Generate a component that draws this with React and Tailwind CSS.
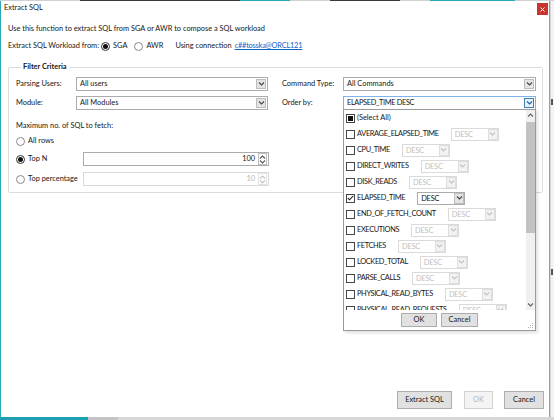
import React from "react";

const Chev = ({ c = "#444", up = false }) => (
  <svg width="7" height="4" viewBox="0 0 7 4" className="block">
    <polyline
      points={up ? "1,3.5 3.5,1 6,3.5" : "1,0.5 3.5,3 6,0.5"}
      fill="none"
      stroke={c}
      strokeWidth="1.1"
    />
  </svg>
);

function ArrowBox({ state = "normal", h = "h-[10px]" }) {
  const cls =
    state === "focus"
      ? "bg-[#e5f1fb] border-[#3c7fb1]"
      : state === "disabled"
      ? "bg-[#f2f2f2] border-[#dedede]"
      : "bg-[#e4e4e4] border-[#bdbdbd]";
  const c = state === "focus" ? "#1f5f9a" : state === "disabled" ? "#c2c2c2" : "#444";
  return (
    <span className={`w-[10px] ${h} border ${cls} flex items-center justify-center shrink-0`}>
      <Chev c={c} />
    </span>
  );
}

function Combo({ value, className = "", state = "normal", textCls = "" }) {
  const border = state === "focus" ? "border-[#7eb4ea]" : "border-[#acacac]";
  return (
    <div className={`h-[14px] flex items-center bg-white border ${border} ${className}`}>
      <span className={`flex-1 pl-[3px] whitespace-nowrap overflow-hidden leading-[12px] ${textCls}`}>{value}</span>
      <span className="mr-[1px]">
        <ArrowBox state={state} />
      </span>
    </div>
  );
}

function MiniCombo({ enabled }) {
  return (
    <div
      className={`ml-[12px] w-[48px] h-[13px] flex items-center bg-white border shrink-0 ${
        enabled ? "border-[#acacac]" : "border-[#dadada]"
      }`}
    >
      <span
        className={`flex-1 pl-[3px] leading-[11px] tracking-[-0.2px] ${
          enabled ? "text-[#111]" : "text-[#c0c0c0]"
        }`}
      >
        DESC
      </span>
      <ArrowBox state={enabled ? "normal" : "disabled"} h="h-[11px]" />
    </div>
  );
}

function Radio({ checked, className = "" }) {
  return (
    <span
      className={`w-[9px] h-[9px] rounded-full border ${
        checked ? "border-[#333]" : "border-[#8a8a8a]"
      } flex items-center justify-center shrink-0 bg-white ${className}`}
    >
      {checked && <span className="w-[5px] h-[5px] rounded-full bg-[#111]" />}
    </span>
  );
}

function Check({ state }) {
  return (
    <span className="w-[9px] h-[9px] border border-[#444] bg-white flex items-center justify-center shrink-0">
      {state === "ind" && <span className="w-[5px] h-[5px] bg-[#111]" />}
      {state === "on" && (
        <svg width="7" height="6" viewBox="0 0 7 6" className="block">
          <polyline points="0.8,3 2.6,4.8 6.2,0.8" fill="none" stroke="#222" strokeWidth="1.1" />
        </svg>
      )}
    </span>
  );
}

function NumInput({ value, disabled }) {
  return (
    <div
      className={`w-[186px] h-[14px] flex items-center bg-white border ${
        disabled ? "border-[#d9d9d9]" : "border-[#acacac]"
      }`}
    >
      <span className={`flex-1 text-right pr-[3px] leading-[12px] ${disabled ? "text-[#b8b8b8]" : ""}`}>{value}</span>
      <span
        className={`w-[9px] h-[12px] mr-[1px] flex flex-col items-center justify-center gap-[1px] border ${
          disabled ? "border-[#e2e2e2]" : "border-[#bdbdbd]"
        }`}
      >
        <Chev up c={disabled ? "#c4c4c4" : "#555"} />
        <Chev c={disabled ? "#c4c4c4" : "#555"} />
      </span>
    </div>
  );
}

const rows = [
  ["AVERAGE_ELAPSED_TIME", false],
  ["CPU_TIME", false],
  ["DIRECT_WRITES", false],
  ["DISK_READS", false],
  ["ELAPSED_TIME", true],
  ["END_OF_FETCH_COUNT", false],
  ["EXECUTIONS", false],
  ["FETCHES", false],
  ["LOCKED_TOTAL", false],
  ["PARSE_CALLS", false],
  ["PHYSICAL_READ_BYTES", false],
  ["PHYSICAL_READ_REQUESTS", false],
];

function Popup() {
  return (
    <div className="absolute left-[342px] top-[108px] w-[193px] h-[222px] bg-white border border-[#9a9a9a] flex flex-col shadow-[2px_2px_3px_rgba(0,0,0,0.12)]">
      <div className="h-[200px] flex shrink-0 overflow-hidden">
        <div className="flex-1 flex flex-col overflow-hidden pl-[2px]">
          <div className="h-[16px] flex items-center shrink-0">
            <Check state="ind" />
            <span className="ml-[2px] whitespace-nowrap">(Select All)</span>
          </div>
          {rows.map(([label, on]) => (
            <div key={label} className="h-[16px] flex items-center shrink-0">
              <Check state={on ? "on" : "off"} />
              <span className="ml-[2px] whitespace-nowrap tracking-[-0.35px]">{label}</span>
              <MiniCombo enabled={on} />
            </div>
          ))}
        </div>
        <div className="w-[9px] flex flex-col bg-[#f0f0f0] shrink-0">
          <div className="h-[10px] flex items-center justify-center">
            <Chev up c="#606060" />
          </div>
          <div className="mt-[2px] h-[111px] bg-[#c2c2c2]" />
          <div className="flex-1" />
          <div className="h-[10px] flex items-center justify-center">
            <Chev c="#606060" />
          </div>
        </div>
      </div>
      <div className="flex-1 flex justify-center items-start pt-[3px] gap-[4px] relative">
        <div className="w-[36px] h-[14px] bg-[#e1e1e1] border border-[#adadad] flex items-center justify-center">OK</div>
        <div className="w-[37px] h-[14px] bg-[#e1e1e1] border border-[#adadad] flex items-center justify-center">Cancel</div>
        <svg width="6" height="6" viewBox="0 0 6 6" className="absolute right-[1px] bottom-[1px]">
          <rect x="4" y="0" width="1" height="1" fill="#b5b5b5" />
          <rect x="2" y="2" width="1" height="1" fill="#b5b5b5" />
          <rect x="4" y="2" width="1" height="1" fill="#b5b5b5" />
          <rect x="0" y="4" width="1" height="1" fill="#b5b5b5" />
          <rect x="2" y="4" width="1" height="1" fill="#b5b5b5" />
          <rect x="4" y="4" width="1" height="1" fill="#b5b5b5" />
        </svg>
      </div>
    </div>
  );
}

function Dialog() {
  return (
    <div className="w-[550px] shrink-0 relative bg-white border-l border-l-[#2aa8ba] border-r border-r-[#9c9c9c] flex flex-col">
      <div className="h-[17px] flex items-start justify-between shrink-0">
        <span className="pl-[3px] pt-[1px]">Extract SQL</span>
        <span className="mt-[2px] mr-[1px] w-[11px] h-[12px] bg-[#c9352d] flex items-center justify-center">
          <svg width="5" height="5" viewBox="0 0 5 5" className="block">
            <path d="M0.5 0.5 L4.5 4.5 M4.5 0.5 L0.5 4.5" stroke="#fff" strokeWidth="1" />
          </svg>
        </span>
      </div>
      <div className="flex-1 flex flex-col pl-[7px] pr-[6px]">
        <p className="mt-[5px] h-[12px]">Use this function to extract SQL from SGA or AWR to compose a SQL workload</p>
        <div className="mt-[5px] h-[12px] flex items-center whitespace-nowrap">
          <span>Extract SQL Workload from:</span>
          <Radio checked className="ml-[2px]" />
          <span className="ml-[3px]">SGA</span>
          <Radio className="ml-[7px]" />
          <span className="ml-[3px]">AWR</span>
          <span className="ml-[12px]">Using connection</span>
          <span className="ml-[3px] text-[#0a64c8] underline tracking-[-0.2px]">c##tosska@ORCL121</span>
        </div>
        <fieldset className="mt-[9px] border border-[#dcdcdc] rounded-[2px] pl-[7px] pr-[6px] pb-[6px]">
          <legend className="ml-[5px] px-[2px] font-bold leading-[12px]">Filter Criteria</legend>
          <div className="mt-[4px] flex items-center h-[14px]">
            <span className="w-[60px] shrink-0">Parsing Users:</span>
            <Combo value="All users" className="w-[192px]" />
            <span className="w-[61px] ml-[14px] shrink-0">Command Type:</span>
            <Combo value="All Commands" className="w-[193px]" />
          </div>
          <div className="mt-[5px] flex items-center h-[14px]">
            <span className="w-[60px] shrink-0">Module:</span>
            <Combo value="All Modules" className="w-[192px]" />
            <span className="w-[61px] ml-[14px] shrink-0">Order by:</span>
            <Combo value="ELAPSED_TIME DESC" className="w-[193px]" state="focus" textCls="tracking-[-0.35px]" />
          </div>
          <div className="mt-[10px] h-[12px]">Maximum no. of SQL to fetch:</div>
          <div className="mt-[2px] flex items-center h-[14px]">
            <Radio />
            <span className="ml-[3px]">All rows</span>
          </div>
          <div className="mt-[4px] flex items-center h-[14px]">
            <div className="w-[67px] flex items-center shrink-0">
              <Radio checked />
              <span className="ml-[3px]">Top N</span>
            </div>
            <NumInput value="100" />
          </div>
          <div className="mt-[6px] flex items-center h-[14px]">
            <div className="w-[67px] flex items-center shrink-0">
              <Radio />
              <span className="ml-[3px]">Top percentage</span>
            </div>
            <NumInput value="10" disabled />
          </div>
        </fieldset>
        <div className="flex-1" />
        <div className="flex justify-end items-center pb-[8px] -mr-[1px]">
          <div className="w-[55px] h-[18px] bg-[#e1e1e1] border border-[#adadad] flex items-center justify-center">
            Extract SQL
          </div>
          <div className="ml-[12px] w-[29px] h-[18px] bg-[#f4f4f4] border border-[#d2d2d2] text-[#b5b5b5] flex items-center justify-center">
            OK
          </div>
          <div className="ml-[11px] w-[40px] h-[18px] bg-[#e1e1e1] border border-[#adadad] flex items-center justify-center">
            Cancel
          </div>
        </div>
      </div>
      <Popup />
    </div>
  );
}

export default function App() {
  return (
    <div className="w-[554px] h-[420px] overflow-hidden flex flex-col bg-[#e4e4e4] font-['Lato',sans-serif] text-[7.4px] leading-[12px] text-[#161616]">
      <div className="h-[1px] flex shrink-0">
        <div className="w-[80px] bg-[#d0d0d0]" />
        <div className="w-[160px] bg-[#3a3a3a]" />
        <div className="w-[50px] bg-[#2ba9bb]" />
        <div className="w-[40px] bg-[#d0d0d0]" />
        <div className="w-[70px] bg-[#3a3a3a]" />
        <div className="w-[30px] bg-[#d0d0d0]" />
        <div className="w-[85px] bg-[#2ba9bb]" />
        <div className="flex-1 bg-[#d0d0d0]" />
      </div>
      <div className="flex flex-1 min-h-0">
        <Dialog />
        <div className="flex-1 bg-[#f3f3f3] flex flex-col border-l border-l-[#d6d6d6]">
          <div className="h-[98px]" />
          <div className="h-[6px] w-[2px] bg-[#555]" />
          <div className="h-[164px]" />
          <div className="h-[6px] w-[2px] bg-[#555]" />
        </div>
      </div>
      <div className="h-[3px] flex shrink-0">
        <div className="w-[88px] bg-[#1b9fb2]" />
        <div className="w-[30px] bg-[#c4c4c4]" />
        <div className="flex-1 bg-[#d8d8d8]" />
      </div>
    </div>
  );
}
